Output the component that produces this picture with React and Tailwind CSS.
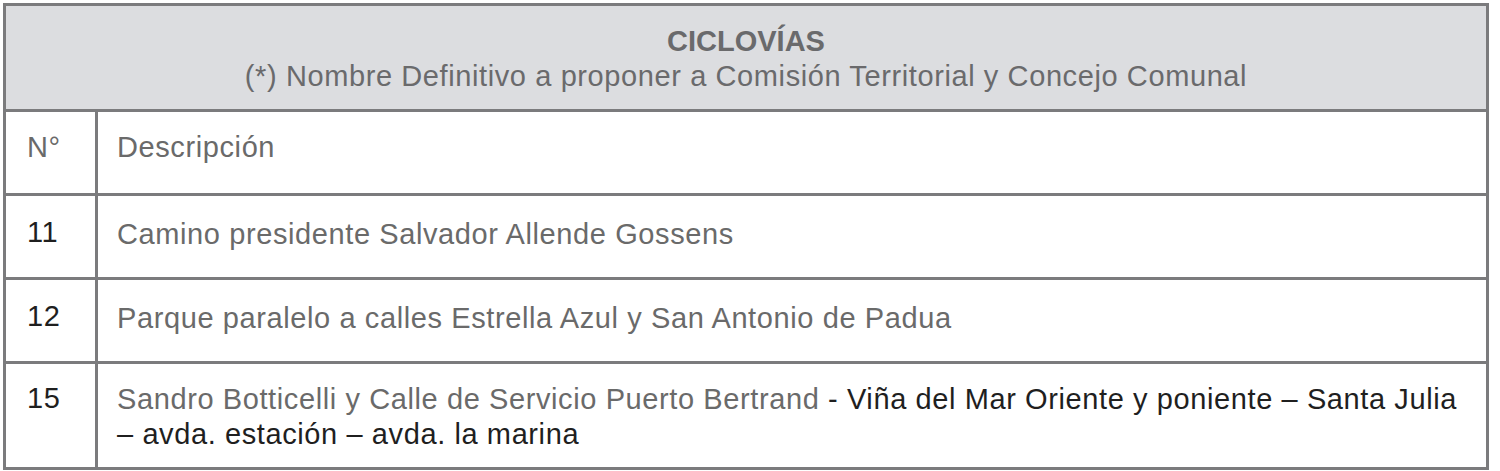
export default function App() {
    const rows = [
        { n: "11", desc: "Camino presidente Salvador Allende Gossens" },
        { n: "12", desc: "Parque paralelo a calles Estrella Azul y San Antonio de Padua" },
    ];

    return (
        <div className="w-[1500px] h-[471px] bg-white pl-[3px] pt-[3px]" style={{ fontFamily: '"Liberation Sans", Arial, sans-serif' }}>
            <table className="w-[1486px] border-collapse text-[29px] tracking-[0.6px] leading-[35px] text-[#6a6a6a]">
                <thead>
                <tr>
                    <th colSpan={2} className="h-[106px] bg-[#dcdde0] border-[3px] border-[#7b7b7d] font-normal text-center pt-[18px] align-top">
                        <div className="font-bold text-[#6a6a6c] tracking-normal">CICLOVÍAS</div>
                        <div className="text-[#6a6a6c]">(*) Nombre Definitivo a proponer a Comisión Territorial y Concejo Comunal</div>
                    </th>
                </tr>
                </thead>
                <tbody>
                <tr>
                    <td className="w-[92px] h-[84px] border-[3px] border-[#7b7b7d] align-top pl-[21px] pt-[18px]">N°</td>
                    <td className="h-[84px] border-[3px] border-[#7b7b7d] align-top pl-[19px] pr-[20px] pt-[18px]">Descripción</td>
                </tr>
                {rows.map((row, index) => (
                    <tr key={index}>
                        <td className="h-[84px] border-[3px] border-[#7b7b7d] align-top pl-[21px] pt-[19px] text-[#1f1f1f]">{row.n}</td>
                        <td className="h-[84px] border-[3px] border-[#7b7b7d] align-top pl-[19px] pr-[20px] pt-[21px]">{row.desc}</td>
                    </tr>
                ))}
                <tr>
                    <td className="h-[106px] border-[3px] border-[#7b7b7d] align-top pl-[21px] pt-[17px] text-[#1f1f1f]">15</td>
                    <td className="h-[106px] border-[3px] border-[#7b7b7d] align-top pl-[19px] pr-[20px] pt-[18px]">
                        Sandro Botticelli y Calle de Servicio Puerto Bertrand{" "}
                        <span className="text-[#1f1f1f]">- Viña del Mar Oriente y poniente – Santa Julia – avda. estación – avda. la marina</span>
                    </td>
                </tr>
                </tbody>
            </table>
        </div>
    );
}
